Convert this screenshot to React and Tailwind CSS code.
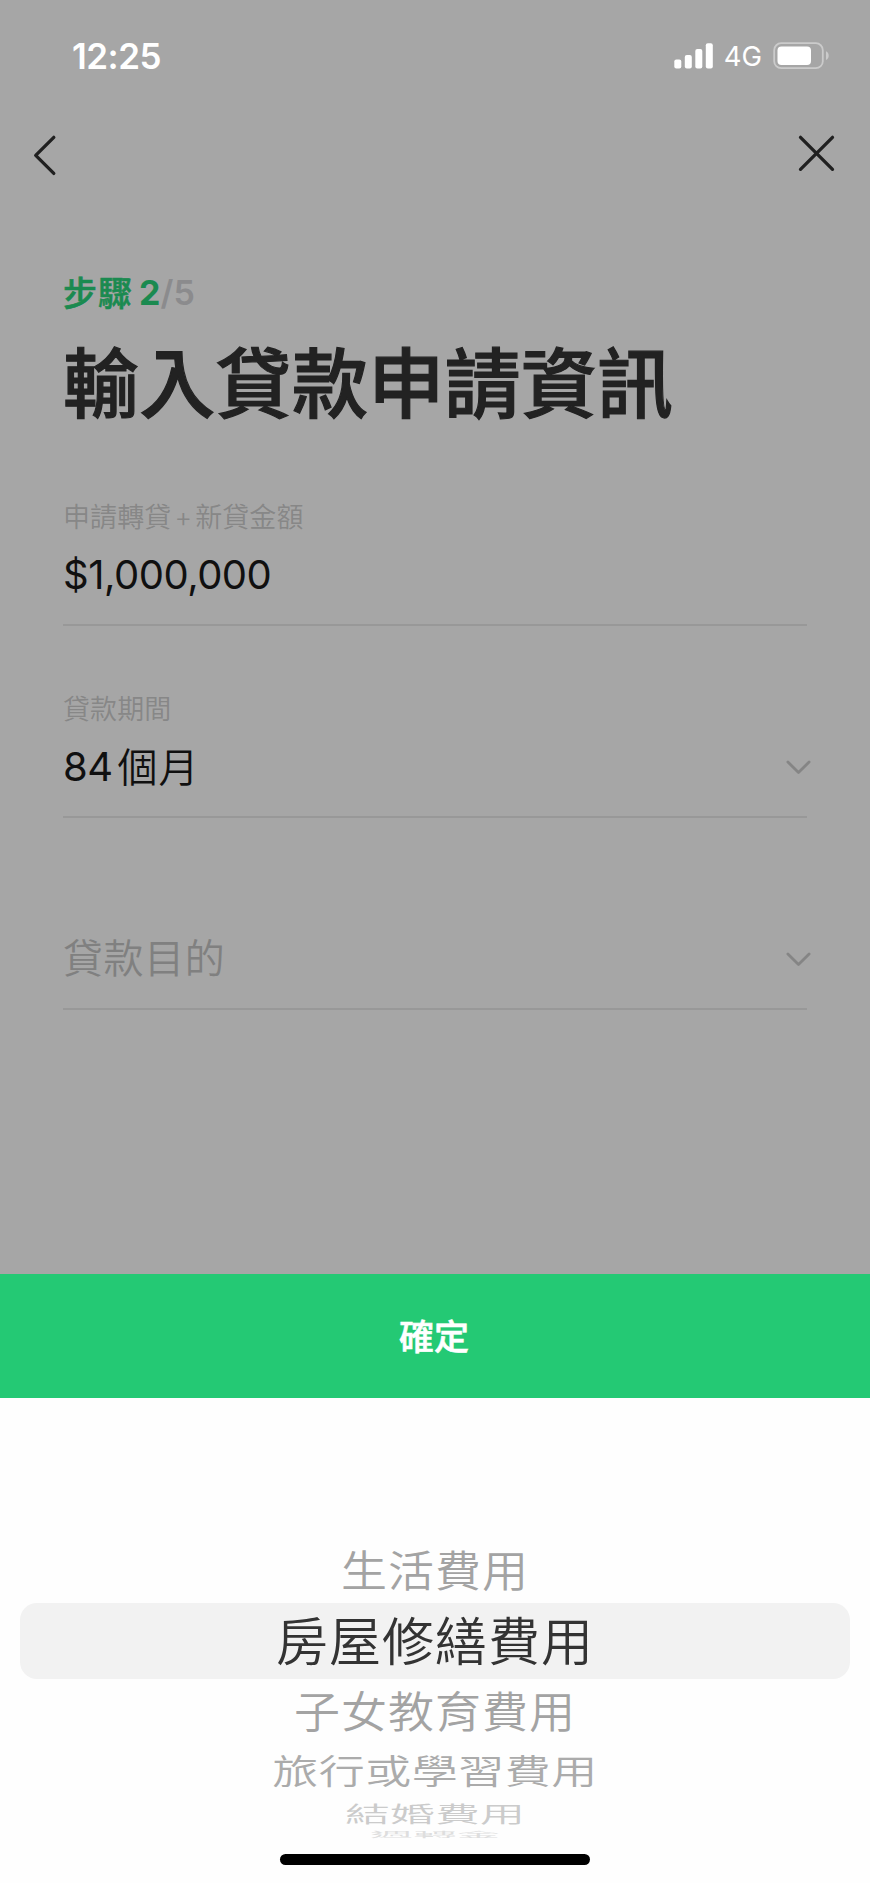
import React, { useState } from 'react';

const PURPOSES = [
  { label: '生活費用', row: 'h-[66px] pt-[2px]', text: 'text-[46px] tracking-[1px] scale-y-[0.94] text-[#a3a3a3]' },
  { label: '房屋修繕費用', row: 'h-[76px] pt-[4px]', text: 'text-[52px] tracking-[1px] text-[#333333]' },
  { label: '子女教育費用', row: 'h-[64px] pt-[1px]', text: 'text-[46px] tracking-[1px] scale-y-[0.94] text-[#a3a3a3]' },
  { label: '旅行或學習費用', row: 'h-[56px]', text: 'text-[46px] tracking-[0.5px] scale-y-[0.75] text-[#ababab]' },
  { label: '結婚費用', row: 'h-[30px]', text: 'text-[45px] scale-y-[0.48] text-[#cbcbcb]' },
  { label: '週轉金', row: 'h-[12px]', text: 'text-[43.5px] scale-y-[0.17] text-[#dedede]' },
];

const StatusBar = () => (
  <div className="flex h-[112px] items-center justify-between pl-[72px] pr-[40px] text-white">
    <span className="text-[35px] font-semibold leading-none tracking-[-0.5px]">12:25</span>
    <div className="flex items-center">
      <svg width="40" height="26" viewBox="0 0 40 26" fill="currentColor">
        <rect x="0.3" y="16.5" width="7" height="9" rx="2" />
        <rect x="10.8" y="12" width="7" height="13.5" rx="2" />
        <rect x="21.3" y="6" width="7" height="19.5" rx="2" />
        <rect x="31.8" y="0.3" width="7" height="25.2" rx="2" />
      </svg>
      <span className="ml-[10px] pt-[1px] text-[27.5px] leading-none">4G</span>
      <svg className="ml-[11px]" width="57" height="28" viewBox="0 0 57 28" fill="none">
        <rect x="1.2" y="1.2" width="48.6" height="25" rx="7" stroke="#cbcbcb" strokeWidth="1.8" />
        <rect x="4.5" y="4.5" width="33.5" height="18.5" rx="4" fill="#ffffff" />
        <path d="M53 9.3 C56.6 10.8 56.6 16.6 53 18.1 Z" fill="#cbcbcb" />
      </svg>
    </div>
  </div>
);

const NavBar = () => (
  <div className="flex h-[88px] items-start justify-between pl-[33px] pr-[35px] pt-[22px] text-[#202020]">
    <button type="button" aria-label="返回">
      <svg width="24" height="42" viewBox="0 0 24 42" fill="none" stroke="currentColor" strokeWidth="3.3" strokeLinecap="round" strokeLinejoin="round">
        <path d="M20.8 3.3 L2.7 21.4 L20.8 39.4" />
      </svg>
    </button>
    <button type="button" aria-label="關閉">
      <svg width="38" height="38" viewBox="0 0 38 38" fill="none" stroke="currentColor" strokeWidth="3.3" strokeLinecap="round">
        <path d="M3.5 3.3 L35.5 35.3 M35.5 3.3 L3.5 35.3" />
      </svg>
    </button>
  </div>
);

const Chevron = () => (
  <svg className="-mr-[4px]" width="26" height="16" viewBox="0 0 26 16" fill="none" stroke="#858585" strokeWidth="2.8" strokeLinecap="round" strokeLinejoin="round">
    <path d="M2.9 3 L13.5 13.4 L24.1 3" />
  </svg>
);

const Field = ({ label, children, select }) => (
  <div className="flex h-[192px] flex-col justify-end border-b-2 border-[#989898]">
    <div className="flex h-[40px] items-center pt-[3px] text-[27px] font-[350] leading-none tracking-[0.1px] text-[#878787]">{label}</div>
    <div className="flex h-[88px] items-center justify-between pb-[10px] text-[40px] leading-none">
      <div className="flex items-center">{children}</div>
      {select && <Chevron />}
    </div>
  </div>
);

const Picker = ({ value, onChange }) => (
  <div className="flex flex-col items-stretch px-5 pt-[139px]">
    {PURPOSES.map((item) => (
      <button
        key={item.label}
        type="button"
        onClick={() => onChange(item.label)}
        className={`flex w-full items-center justify-center ${item.row} ${value === item.label ? 'rounded-[17px] bg-[#f2f2f2]' : ''}`}
      >
        <span className={`block whitespace-nowrap font-[350] leading-none ${item.text}`}>{item.label}</span>
      </button>
    ))}
  </div>
);

export default function App() {
  const [purpose, setPurpose] = useState('房屋修繕費用');

  return (
    <div
      lang="zh-Hant"
      className="flex h-[1883px] w-[870px] flex-col overflow-hidden bg-[#a6a6a6] font-[Inter,'Noto_Sans_CJK_TC',sans-serif]"
    >
      <StatusBar />
      <NavBar />

      <main className="flex h-[1074px] flex-col pl-[63px] pr-[63px]">
        <div className="flex h-[234px] flex-col pt-[72px]">
          <p className="flex h-[42px] items-center text-[34px] font-bold leading-none text-[#1b8a50]">
            <span className="pt-[2px] font-medium tracking-[1px] [-webkit-text-stroke:0.6px_currentColor]">步驟</span>
            <span className="ml-[6px]">2</span>
            <span className="font-semibold tracking-[0.3px] text-[#8b8b8d]">/5</span>
          </p>
          <h1 className="mt-[32px] whitespace-nowrap text-[76px] font-medium leading-none tracking-[0.3px] text-[#222222] [-webkit-text-stroke:1.2px_currentColor]">輸入貸款申請資訊</h1>
        </div>

        <Field label={<>申請轉貸<span className="mx-[3px]">+</span>新貸金額</>}>
          <span className="font-[370] tracking-[-0.5px] text-[#101010]">$1,000,000</span>
        </Field>
        <Field label="貸款期間" select>
          <span className="font-[370] tracking-[-0.5px] text-[#101010]">84</span>
          <span className="ml-[5px] pt-[1px] font-[350] tracking-[1px] text-[#101010]">個月</span>
        </Field>
        <Field select>
          <span className="font-[350] tracking-[0.6px] text-[#808080]">貸款目的</span>
        </Field>
      </main>

      <section className="flex h-[609px] flex-col bg-[#fefefe]">
        <button type="button" className="h-[124px] w-full shrink-0 bg-[#24c974] pr-[2px] pt-[3px] text-[35px] font-medium leading-none text-white [-webkit-text-stroke:0.6px_currentColor]">
          確定
        </button>
        <Picker value={purpose} onChange={setPurpose} />
        <div className="mx-auto mt-[13px] h-[11px] w-[310px] rounded-full bg-black" />
      </section>
    </div>
  );
}
